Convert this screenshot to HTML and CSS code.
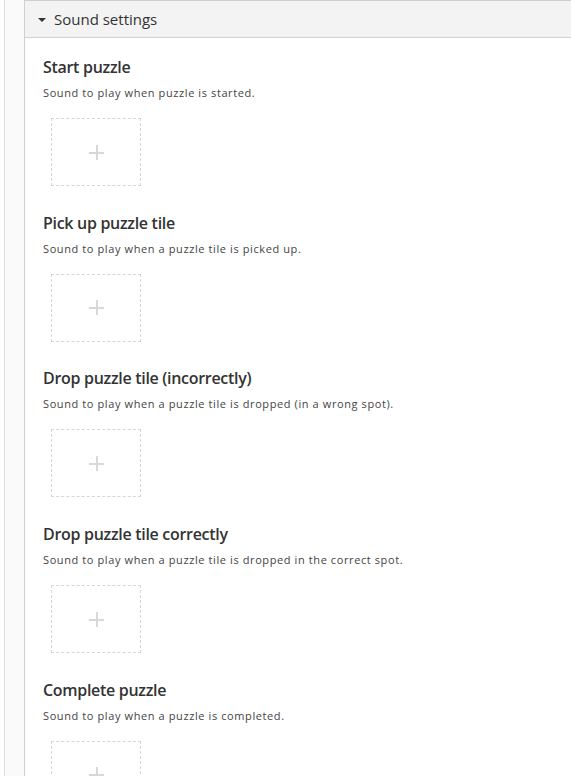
FILE: index.html
```html
<!DOCTYPE html>
<html>
<head>
<meta charset="utf-8">
<link rel="stylesheet" href="styles.css">
</head>
<body>
<div class="page">
  <div class="rail">
    <div class="group">
      <div class="group-header">
        <span class="caret"></span>
        <span class="group-title">Sound settings</span>
      </div>
      <div class="group-content">
        <div class="field">
          <div class="field-label">Start puzzle</div>
          <div class="field-desc">Sound to play when puzzle is started.</div>
          <div class="dropzone"><span class="plus"></span></div>
        </div>
        <div class="field">
          <div class="field-label">Pick up puzzle tile</div>
          <div class="field-desc">Sound to play when a puzzle tile is picked up.</div>
          <div class="dropzone"><span class="plus"></span></div>
        </div>
        <div class="field">
          <div class="field-label">Drop puzzle tile (incorrectly)</div>
          <div class="field-desc">Sound to play when a puzzle tile is dropped (in a wrong spot).</div>
          <div class="dropzone"><span class="plus"></span></div>
        </div>
        <div class="field">
          <div class="field-label">Drop puzzle tile correctly</div>
          <div class="field-desc">Sound to play when a puzzle tile is dropped in the correct spot.</div>
          <div class="dropzone"><span class="plus"></span></div>
        </div>
        <div class="field">
          <div class="field-label">Complete puzzle</div>
          <div class="field-desc">Sound to play when a puzzle is completed.</div>
          <div class="dropzone"><span class="plus"></span></div>
        </div>
      </div>
    </div>
  </div>
</div>
</body>
</html>
```
FILE: styles.css
```css
html, body {
  margin: 0;
  padding: 0;
  background: #fff;
  font-family: "Open Sans", "Liberation Sans", sans-serif;
  color: #353535;
}
.page {
  padding-left: 4px;
  height: 776px;
  overflow: hidden;
}
.rail {
  border-left: 1px solid #dedede;
  background: #fafafa;
  padding-left: 19px;
  height: 100%;
}
.group {
  border-left: 1px solid #d0d0d0;
  border-top: 1px solid #d0d0d0;
  background: #fff;
  height: 100%;
}
.group-header {
  background: #f3f3f3;
  border-bottom: 1px solid #d0d0d0;
  height: 36px;
  display: flex;
  align-items: center;
  padding-left: 13px;
}
.caret {
  width: 0;
  height: 0;
  border-left: 4px solid transparent;
  border-right: 4px solid transparent;
  border-top: 4px solid #333;
  margin-right: 8px;
  margin-top: 1px;
}
.group-title {
  font-size: 15px;
  color: #333;
}
.group-content {
  padding: 18px 0 0 18px;
}
.field {
  height: 155.7px;
}
.field-label {
  font-size: 16px;
  font-weight: 600;
  color: #333;
  line-height: 22px;
  letter-spacing: -0.3px;
}
.field-desc {
  font-size: 11px;
  letter-spacing: 0.6px;
  color: #444;
  line-height: 16px;
  margin-top: 7px;
}
.dropzone {
  margin-top: 17px;
  margin-left: 8px;
  width: 88px;
  height: 66px;
  border: 1px dashed #d6d6d6;
  display: flex;
  align-items: center;
  justify-content: center;
}
.plus {
  position: relative;
  width: 15px;
  height: 15px;
}
.plus::before, .plus::after {
  content: "";
  position: absolute;
  background: #d8d8d8;
}
.plus::before {
  left: 7px;
  top: 0;
  width: 2px;
  height: 15px;
}
.plus::after {
  top: 7px;
  left: 0;
  height: 2px;
  width: 15px;
}
```
